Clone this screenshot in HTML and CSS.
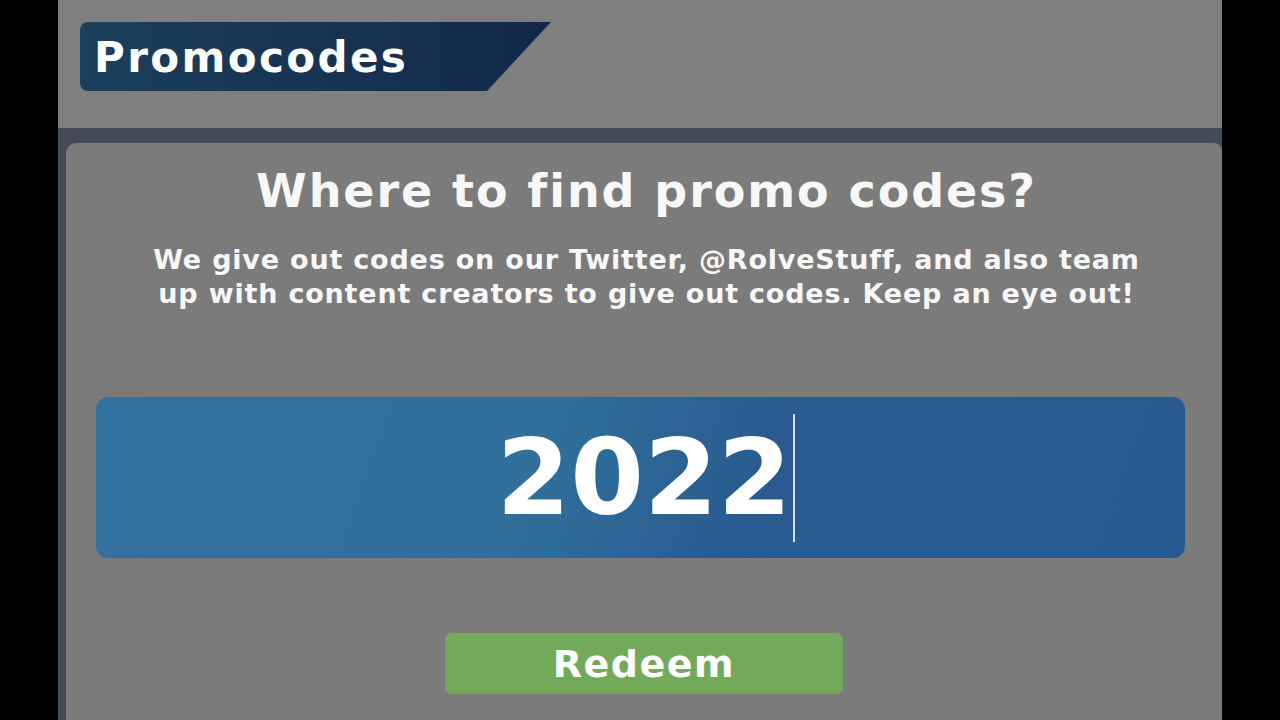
FILE: index.html
```html
<!DOCTYPE html>
<html lang="en">
<head>
  <meta charset="UTF-8">
  <meta name="viewport" content="width=device-width, initial-scale=1.0">
  <title>Promocodes</title>
  <link rel="stylesheet" href="styles.css">
</head>
<body>

<div class="screen">
  <div class="header"><div class="tab">Promocodes</div></div>
  <div class="frame">
    <div class="panel">
      <h1 class="title">Where to find promo codes?</h1>
      <p class="info">We give out codes on our Twitter, @RolveStuff, and also team<br>up with content creators to give out codes. Keep an eye out!</p>
      <div class="code-box"><span class="code">2022</span><span class="caret"></span></div>
      <button class="redeem">Redeem</button>
    </div>
  </div>
</div>

</body>
</html>
```

FILE: styles.css
```css
body { margin: 0; background-color: #000; font-family: "DejaVu Sans", "Open Sans", sans-serif; overflow: hidden; }
.screen { width: 1164px; height: 720px; margin: 0 auto; background-color: #7f7f7f; display: flex; flex-direction: column; }
.header { height: 128px; padding: 22px 0 0 22px; box-sizing: border-box; }
.tab { width: 471px; height: 69px; box-sizing: border-box; padding: 1px 0 0 14px; border-radius: 8px 0 0 8px; background: linear-gradient(90deg, #1c405c, #12284a); clip-path: polygon(0 0, 100% 0, calc(100% - 64px) 100%, 0 100%); color: #fff; font-size: 42px; font-weight: 700; letter-spacing: 2.4px; line-height: 69px; }
.frame { flex: 1; background-color: #444b56; padding: 15px 0 0 8px; display: flex; }
.panel { flex: 1; padding-left: 5px; background-color: #7b7b7b; border-radius: 10px 8px 0 0; display: flex; flex-direction: column; align-items: center; }
.title { margin: 20px 0 0; color: #f7f7f7; font-size: 46px; font-weight: 700; letter-spacing: 1.9px; line-height: 56px; }
.info { margin: 24px 0 0; color: #f7f7f7; font-size: 27px; font-weight: 700; letter-spacing: 0.8px; line-height: 34px; text-align: center; }
.code-box { align-self: stretch; margin: 86px 37px 0 25px; padding-left: 10px; height: 161px; border-radius: 12px; background: linear-gradient(110deg, #32729c 0%, #30709b 40%, #295b90 60%, #285a8f 100%); display: flex; justify-content: center; align-items: center; color: #fff; }
.code { font-size: 106px; font-weight: 700; line-height: 1; }
.caret { width: 2px; height: 128px; margin-left: 1px; background-color: #d4e3ef; }
.redeem { margin-top: 75px; margin-right: 5px; width: 398px; height: 61px; border: none; border-radius: 7px; background-color: #72a95a; color: #fff; font-family: inherit; font-size: 38px; font-weight: 700; letter-spacing: 1.5px; padding: 0; cursor: pointer; }
```
